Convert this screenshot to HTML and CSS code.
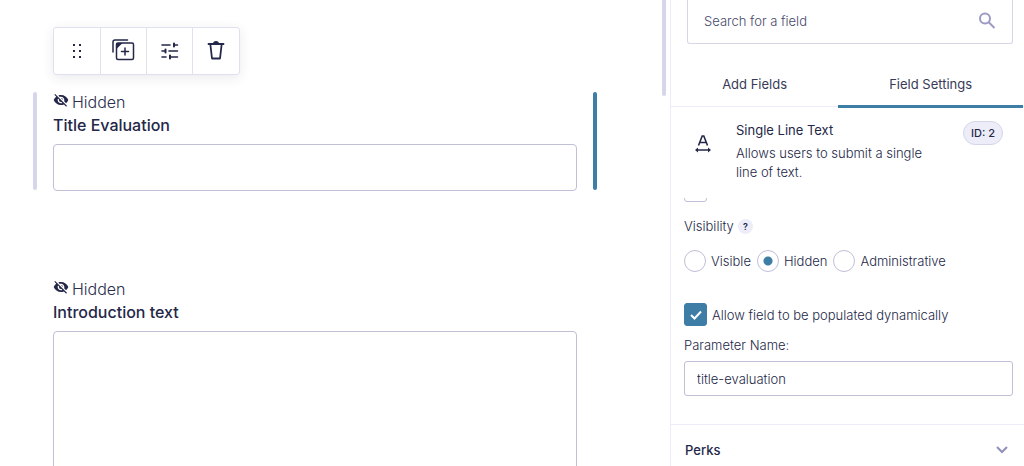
FILE: index.html
```html
<!DOCTYPE html>
<html lang="en">
<head>
<meta charset="utf-8">
<meta name="viewport" content="width=device-width, initial-scale=1">
<title>Form Editor</title>
<link rel="stylesheet" href="styles.css">
</head>
<body>
<div class="app">
  <main class="canvas">
    <div class="toolbar" role="toolbar" aria-label="Field actions">
      <button class="tool" type="button" aria-label="Move">
        <svg width="24" height="24" viewBox="0 0 24 24" fill="currentColor"><path d="M8 5h2v2H8zM14 5h2v2h-2zM8 11h2v2H8zM14 11h2v2h-2zM8 17h2v2H8zM14 17h2v2h-2z"/></svg>
      </button>
      <button class="tool" type="button" aria-label="Duplicate">
        <svg width="24" height="24" viewBox="0 0 24 24" fill="none" stroke="currentColor" stroke-width="1.500" stroke-linecap="round"><rect x="4.500" y="4" width="17" height="16.500" rx="1.500"/><path d="M1 13V3Q1 1 3 1H15.500M13 9v7M9.500 12.500h7"/><path d="M4.500 4h6L4.500 10z" fill="currentColor" stroke="none"/></svg>
      </button>
      <button class="tool" type="button" aria-label="Settings">
        <svg width="24" height="24" viewBox="0 0 24 24" fill="none" stroke="currentColor" stroke-width="1.600" stroke-linecap="round"><path d="M4 6h8M16 6h3.500M4 12h3M11 12h8.500M4 18h4M12 18h7.500"/><path d="M16 4.500v3M7.500 10.500v3M12 16.500v3" stroke-width="2"/></svg>
      </button>
      <button class="tool" type="button" aria-label="Delete">
        <svg width="24" height="24" viewBox="0 0 24 24" fill="none" stroke="currentColor" stroke-width="1.800" stroke-linecap="round" stroke-linejoin="round"><path d="M4.500 5h15M6.300 5l1.700 14.500h8L17.700 5"/><path d="M9 5q0-3 3-3t3 3z" fill="currentColor" stroke="none"/></svg>
      </button>
    </div>
    <section class="field field-selected">
      <div class="status">
        <svg class="eye" width="16" height="16" viewBox="0 0 24 24" fill="currentColor"><path d="M12 7c2.760 0 5 2.240 5 5 0 .65-.13 1.260-.36 1.830l2.920 2.920c1.510-1.260 2.700-2.890 3.430-4.750-1.730-4.390-6-7.500-11-7.500-1.400 0-2.740.25-3.980.7l2.160 2.160C10.740 7.130 11.350 7 12 7zM2 4.270l2.280 2.280.46.46C3.080 8.300 1.780 10.020 1 12c1.730 4.390 6 7.500 11 7.500 1.550 0 3.030-.3 4.380-.84l.42.42L19.730 22 21 20.730 3.270 3 2 4.270zM7.530 9.800l1.550 1.550c-.05.21-.08.43-.08.65 0 1.660 1.340 3 3 3 .22 0 .44-.03.65-.08l1.550 1.550c-.67.33-1.410.53-2.200.53-2.760 0-5-2.240-5-5 0-.79.2-1.530.53-2.200zm4.310-.78l3.150 3.150.02-.16c0-1.660-1.340-3-3-3l-.17.010z"/></svg>
        <span>Hidden</span>
      </div>
      <label class="title" for="evaluation">Title Evaluation</label>
      <input class="box" id="evaluation" type="text">
    </section>
    <section class="field">
      <div class="status">
        <svg class="eye" width="16" height="16" viewBox="0 0 24 24" fill="currentColor"><path d="M12 7c2.760 0 5 2.240 5 5 0 .65-.13 1.260-.36 1.830l2.920 2.920c1.510-1.260 2.700-2.890 3.430-4.750-1.730-4.390-6-7.500-11-7.500-1.400 0-2.740.25-3.980.7l2.160 2.160C10.740 7.130 11.350 7 12 7zM2 4.270l2.280 2.280.46.46C3.080 8.300 1.780 10.020 1 12c1.730 4.390 6 7.500 11 7.500 1.550 0 3.030-.3 4.380-.84l.42.42L19.730 22 21 20.730 3.270 3 2 4.270zM7.530 9.800l1.550 1.550c-.05.21-.08.43-.08.65 0 1.660 1.340 3 3 3 .22 0 .44-.03.65-.08l1.550 1.550c-.67.33-1.410.53-2.200.53-2.760 0-5-2.240-5-5 0-.79.2-1.530.53-2.200zm4.310-.78l3.150 3.150.02-.16c0-1.660-1.340-3-3-3l-.17.010z"/></svg>
        <span>Hidden</span>
      </div>
      <label class="title" for="introduction">Introduction text</label>
      <textarea class="box box-tall" id="introduction"></textarea>
    </section>
  </main>
  <div class="scroll-thumb"></div>
  <aside class="sidebar">
    <div class="search">
      <input class="search-input" type="search" placeholder="Search for a field" aria-label="Search for a field">
      <button class="icon-button" type="button" aria-label="Search">
        <svg width="18" height="18" viewBox="0 0 18 18" fill="none" stroke="currentColor" stroke-width="2"><circle cx="7" cy="6.500" r="5"/><path d="M10.500 10l6 6"/></svg>
      </button>
    </div>
    <div class="tabs" role="tablist">
      <button class="tab" type="button" role="tab" aria-selected="false">Add Fields</button>
      <button class="tab tab-active" type="button" role="tab" aria-selected="true">Field Settings</button>
    </div>
    <div class="summary">
      <svg class="type-icon" width="18" height="18" viewBox="0 0 18 18" fill="none" stroke="currentColor" stroke-width="1.600"><path d="M4.500 10.500L8.200 1h1.600l3.700 9.500M5.800 7.500h6.400"/><path d="M2 15h14" stroke-width="1.500"/><path d="M1 15l3-2.500v5zM17 15l-3-2.500v5z" fill="currentColor" stroke="none"/></svg>
      <div class="summary-text">
        <h2 class="summary-title">Single Line Text</h2>
        <p class="summary-info">Allows users to submit a single line of text.</p>
      </div>
      <span class="badge">ID: 2</span>
    </div>
    <div class="settings">
      <div class="clip"><input class="check" type="checkbox" aria-label="Previous option"></div>
      <div class="visibility"><span id="visibility">Visibility</span><button class="help" type="button" aria-label="Help">?</button></div>
      <div class="radios" role="radiogroup" aria-labelledby="visibility">
        <label class="option"><input class="radio" type="radio" name="visibility">Visible</label>
        <label class="option"><input class="radio" type="radio" name="visibility" checked>Hidden</label>
        <label class="option"><input class="radio" type="radio" name="visibility">Administrative</label>
      </div>
      <label class="option dynamic"><span class="check-wrap"><input class="check" type="checkbox" checked><svg class="tick" width="12" height="10" viewBox="0 0 12 10" fill="none" stroke="currentColor" stroke-width="2"><path d="M1 5l3.500 3.500L11 1.500"/></svg></span>Allow field to be populated dynamically</label>
      <label class="parameter-label" for="parameter">Parameter Name:</label>
      <input class="parameter" id="parameter" type="text" value="title-evaluation">
    </div>
    <button class="perks" type="button" aria-expanded="false">Perks
      <svg class="chevron" width="12" height="8" viewBox="0 0 12 8" fill="none" stroke="currentColor" stroke-width="2"><path d="M1 1l5 5 5-5"/></svg>
    </button>
  </aside>
</div>
</body>
</html>
```
FILE: styles.css
```css
* { box-sizing: border-box; }
body {
  margin: 0;
  background: #fff;
  color: #242748;
  font: 300 13px/18px Inter, "Liberation Sans", sans-serif;
  overflow: hidden;
}
button, input, textarea { font: inherit; color: inherit; }
button { padding: 0; border: 0; background: none; }
svg { display: block; flex: none; }
.app {
  display: grid;
  grid-template-columns: minmax(0, 1fr) 4px 354px;
  column-gap: 4px;
  height: 100vh;
  overflow: hidden;
}
.canvas { padding: 27px 61px 0 33px; overflow: hidden; }
.toolbar {
  display: inline-flex;
  margin-left: 20px;
  border: 1px solid #dfe0f0;
  border-radius: 3px;
  box-shadow: 0 3px 12px #24274818;
  vertical-align: top;
}
.tool { display: grid; place-items: center; width: 46px; height: 46px; }
.tool + .tool { border-left: 1px solid #dfe0f0; }
.tool:last-child { width: 47px; }
.field {
  display: flex;
  flex-direction: column;
  margin-bottom: 88px;
  padding: 0 16px;
  border: 0 solid transparent;
  border-width: 0 4px;
}
.toolbar + .field { margin-top: 17px; }
.field-selected { position: relative; }
.field-selected::before, .field-selected::after {
  content: "";
  position: absolute;
  top: 0;
  bottom: 1px;
  left: -4px;
  width: 4px;
  border-radius: 2px;
  background: #d5d6e9;
}
.field-selected::after { left: auto; right: -4px; background: #3e7da6; }
.status { display: flex; align-items: flex-start; gap: 3px; height: 20px; font-size: 16px; line-height: 20px; color: #2c2f4e; }
.eye { color: #242748; }
.title { margin: 2px 0 8px; font-size: 16px; line-height: 22px; font-weight: 500; }
.box { width: 100%; height: 47px; border: 1px solid #bfbfd6; border-radius: 4px; background: #fff; }
.box-tall { height: 160px; resize: none; }
.scroll-thumb { height: 96px; border-radius: 0 0 2px 2px; background: #d5d6e9; }
.sidebar { border-left: 1px solid #ecedf8; }
.search {
  display: flex;
  align-items: center;
  justify-content: space-between;
  height: 44px;
  margin: 0 11px 0 16px;
  padding: 0 16px 2px;
  border: 1px solid #d5d7e9;
  border-top: 0;
  border-radius: 0 0 3px 3px;
}
.search-input { flex: 1; min-width: 0; padding: 0; border: 0; background: none; outline: 0; }
.search-input::placeholder { color: #45486a; opacity: 1; }
.icon-button { color: #9b9ac5; }
.tabs { display: grid; grid-template-columns: 9fr 10fr; height: 66px; margin-top: -2px; padding-top: 18px; background: linear-gradient(#ecedf8, #ecedf8) 0 64px / 100% 1px no-repeat; }
.tab { height: 48px; font-weight: 400; color: #383b58; }
.tab-active { margin-right: 1px; border-bottom: 3px solid #3e7da6; padding-top: 3px; }
.summary { display: flex; align-items: flex-start; height: 89px; padding: 13px 21px 0 23px; }
.type-icon { margin: 14px 24px 0 0; }
.summary-text { flex: 1; }
.summary-title { margin: 0 0 5px; font-size: 13px; line-height: 18px; font-weight: 400; }
.summary-info { max-width: 195px; margin: 0; line-height: 19px; }
.badge { padding: 2px 7px; border: 1px solid #d5d7e9; border-radius: 12px; background: #ecedf8; font-size: 11px; font-weight: 500; }
.settings { padding: 0 11px 28px 13px; }
.clip { display: flex; align-items: flex-end; height: 4px; margin-top: 1px; overflow: hidden; }
.visibility { display: flex; align-items: center; gap: 4px; margin-top: 15px; }
.help { width: 15px; height: 15px; border-radius: 50%; background: #ecedf8; font-size: 9px; line-height: 15px; font-weight: 600; }
.radios { display: flex; gap: 6px; margin-top: 15px; }
.option { display: flex; align-items: center; gap: 5px; }
.radio, .check { appearance: none; flex: none; margin: 0; border: 1px solid #bfbfd6; background: #fff; }
.radio { width: 22px; height: 22px; border-radius: 50%; }
.radio:checked { background: radial-gradient(circle, #3e7da6 0 4px, #fff 5px); }
.check { width: 23px; height: 23px; border-radius: 3px; }
.check:checked { border-color: #3e7da6; background: #3e7da6; }
.dynamic { margin-top: 31px; }
.check-wrap { display: grid; place-items: center; }
.check-wrap > * { grid-area: 1 / 1; }
.tick { color: #fff; pointer-events: none; }
.parameter-label { display: block; margin-top: 10px; }
.parameter { width: 100%; height: 35px; margin-top: 7px; padding: 0 12px; border: 1px solid #bfbfd6; border-radius: 3px; }
.perks { display: flex; align-items: center; justify-content: space-between; width: 100%; height: 50px; padding: 0 16px 0 14px; border-top: 1px solid #ecedf8; font-weight: 500; }
.chevron { color: #9091b8; }
```
